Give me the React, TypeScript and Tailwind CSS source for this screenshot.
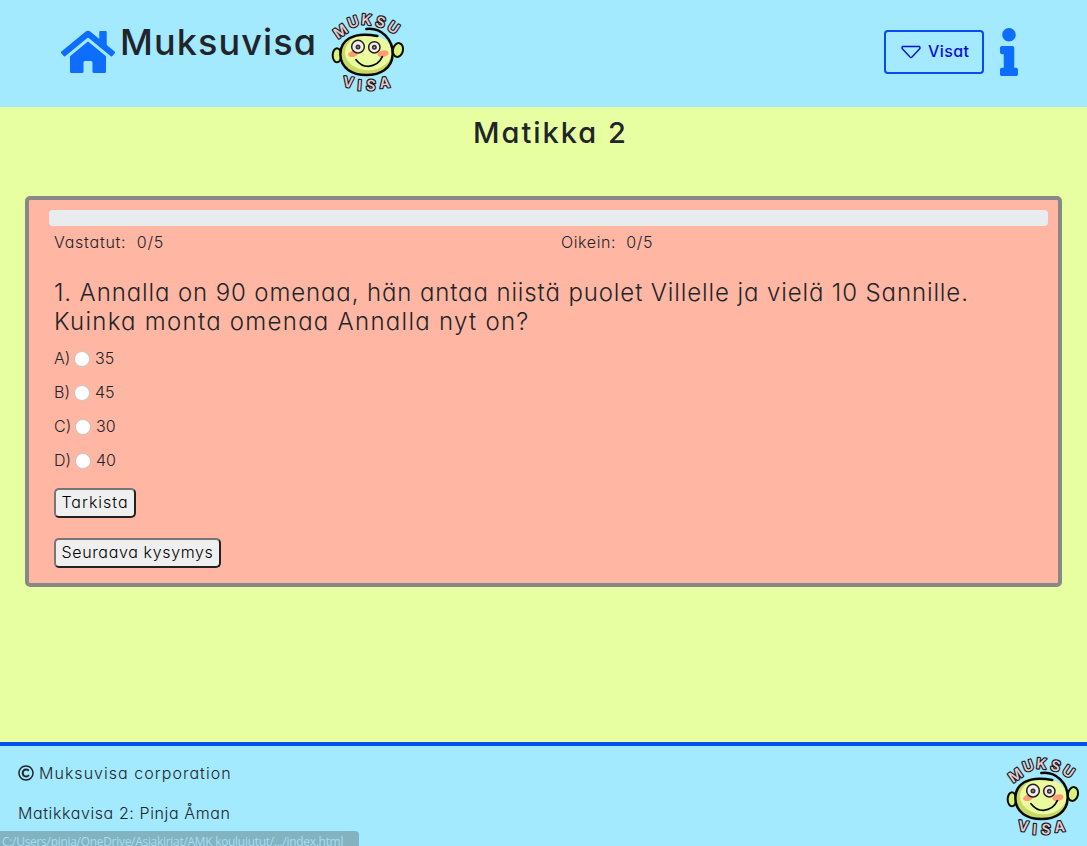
import React from "react";
import { FaHome, FaInfo, FaRegCopyright } from "react-icons/fa";

type Glyph = { ch: string; x: number; y: number; rotate: number };

const topGlyphs: Glyph[] = [
  { ch: "M", x: 47, y: 79, rotate: -35 },
  { ch: "U", x: 85, y: 51, rotate: -20 },
  { ch: "K", x: 124, y: 44, rotate: 5 },
  { ch: "S", x: 167, y: 51, rotate: 16 },
  { ch: "U", x: 205, y: 68, rotate: 34 },
];

const bottomGlyphs: Glyph[] = [
  { ch: "V", x: 70, y: 232, rotate: 8 },
  { ch: "I", x: 104, y: 241, rotate: 4 },
  { ch: "S", x: 138, y: 241, rotate: 6 },
  { ch: "A", x: 179, y: 233, rotate: -6 },
];

function Logo() {
  return (
    <svg viewBox="0 0 255 276" className="h-[92px] w-[85px] shrink-0">
      <g stroke="#0c0c06" strokeWidth="6" fill="#d9f27c">
        <ellipse cx="36" cy="151" rx="13" ry="21" />
        <ellipse cx="219" cy="135" rx="15" ry="21" transform="rotate(12 219 135)" />
      </g>
      <ellipse cx="124" cy="148" rx="78" ry="61" fill="#c9d765" />
      <ellipse cx="130" cy="142" rx="70" ry="54" fill="#eafc9e" />
      <path
        d="M124 72 C168 66 205 104 203 148 C201 190 166 210 124 210 C82 210 47 190 46 148 C46 108 80 78 157 93"
        fill="none"
        stroke="#080805"
        strokeWidth="7.5"
        strokeLinecap="round"
      />
      <ellipse cx="84" cy="147" rx="15" ry="9" fill="#ff9c73" transform="rotate(-12 84 147)" />
      <ellipse cx="174" cy="146" rx="17" ry="10" fill="#ff9c73" transform="rotate(-12 174 146)" />
      <g fill="#f4eef0" stroke="#24221a" strokeWidth="4.5">
        <circle cx="99" cy="125" r="19" />
        <circle cx="148" cy="127" r="17" />
      </g>
      <g fill="#c9c2c2" stroke="#37322c" strokeWidth="5">
        <circle cx="99" cy="126" r="5" />
        <circle cx="148" cy="127" r="5" />
      </g>
      <path d="M93 164 Q108 184 130 184 Q160 182 172 155" fill="none" stroke="#080805" strokeWidth="5" strokeLinecap="round" />
      <g
        fill="#e3cdd2"
        stroke="#1b191b"
        strokeWidth="7"
        strokeLinejoin="round"
        paintOrder="stroke"
        textAnchor="middle"
        className="font-['Inter',sans-serif] text-[43px] font-semibold"
      >
        {[...topGlyphs, ...bottomGlyphs].map((g, i) => (
          <text key={i} transform={`translate(${g.x} ${g.y}) rotate(${g.rotate})`} y="15">
            {g.ch}
          </text>
        ))}
      </g>
    </svg>
  );
}

const answers = [
  { label: "A)", value: "35", labelWidth: "w-[20px]" },
  { label: "B)", value: "45", labelWidth: "w-[20px]" },
  { label: "C)", value: "30", labelWidth: "w-[21px]" },
  { label: "D)", value: "40", labelWidth: "w-[21px]" },
];

export default function App() {
  return (
    <div className="relative flex h-[846px] w-[1087px] flex-col overflow-hidden bg-[#e8ffa1] font-['Inter',sans-serif] text-[16px] leading-6 font-light text-[#212529] [font-feature-settings:'cv11']">
      <header className="flex h-[107px] shrink-0 items-start bg-[#a3e9ff] pl-[61px]">
        <FaHome className="mt-[28px] h-12 w-[54px] text-[#0d6efd]" />
        <h1 className="mt-[18px] ml-[5px] w-[205px] text-[36px] leading-[48px] font-medium tracking-[1.1px] whitespace-nowrap">Muksuvisa</h1>
        <div className="mt-[5px]">
          <Logo />
        </div>
        <button className="mt-[30px] ml-auto flex h-11 w-[100px] items-center rounded-[4px] border-2 border-[#0a4bec] pl-[15px] font-medium tracking-[0.4px] text-[#0b12d4]">
          <svg viewBox="0 0 20 14" className="mr-[7px] h-[14px] w-5">
            <path d="M1.5 1.5 H18.5 Q19.5 3 18.5 4 L11 12 Q10 13 9 12 L1.5 4 Q0.5 3 1.5 1.5Z" fill="none" stroke="currentColor" strokeWidth="1.4" strokeLinejoin="round" />
          </svg>
          <span className="-mt-[2px] whitespace-nowrap">Visat</span>
        </button>
        <FaInfo className="mt-[28px] mr-[69px] ml-4 h-12 w-[18px] text-[#0d6efd]" />
      </header>

      <main className="flex-1">
        <h2 className="mt-[7px] ml-[473px] text-[29px] leading-[38px] font-medium tracking-[2px] whitespace-nowrap">Matikka 2</h2>
        <section className="mt-[44px] mr-[25px] ml-[25px] h-[391px] rounded-[5px] border-4 border-[#888885] bg-[#ffb7a4]">
          <div className="mt-[10px] mr-[10px] ml-5 h-4 rounded-[4px] bg-[#e9ecef]" />
          <div className="mt-1 ml-[25px] flex whitespace-pre">
            <span className="w-[507px] tracking-[0.75px]">Vastatut:  0/5</span>
            <span className="tracking-[0.6px]">Oikein:  0/5</span>
          </div>
          <h3 className="mt-[24px] ml-[25px] text-[24px] leading-[29px] whitespace-nowrap">
            <span className="block tracking-[0.88px]">1. Annalla on 90 omenaa, hän antaa niistä puolet Villelle ja vielä 10 Sannille.</span>
            <span className="block tracking-[1.27px]">Kuinka monta omenaa Annalla nyt on?</span>
          </h3>
          <div className="mt-[10px] ml-[25px] flex flex-col gap-[10px]">
            {answers.map((a) => (
              <label key={a.label} className="flex h-6 items-center">
                <span className={a.labelWidth}>{a.label}</span>
                <input type="radio" name="answer" className="mt-[2px] mr-[5px] size-4 appearance-none rounded-full border border-[#c9c5c3] bg-white" />
                <span>{a.value}</span>
              </label>
            ))}
          </div>
          <div className="mt-4 ml-[25px] flex flex-col items-start gap-5">
            <button className="h-[30px] w-[82px] rounded-[5px] border-2 border-t-[#767676] border-r-[#212121] border-b-[#212121] border-l-[#767676] bg-[#efefef] pb-[2px] text-center leading-6 tracking-[1px] whitespace-nowrap text-black">Tarkista</button>
            <button className="h-[30px] w-[167px] rounded-[5px] border-2 border-t-[#767676] border-r-[#212121] border-b-[#212121] border-l-[#767676] bg-[#efefef] pb-[2px] text-center leading-6 tracking-[0.65px] whitespace-nowrap text-black">Seuraava kysymys</button>
          </div>
        </section>
      </main>

      <footer className="flex h-[104px] shrink-0 items-start border-t-4 border-[#004fee] bg-[#a3e9ff] pl-[18px]">
        <div className="mt-[15px] flex flex-col gap-4">
          <p className="flex items-center gap-[5px]">
            <FaRegCopyright className="size-4" />
            <span className="tracking-[1.03px]">Muksuvisa corporation</span>
          </p>
          <p className="tracking-[0.6px]">Matikkavisa 2: Pinja Åman</p>
        </div>
        <div className="mt-[3px] mr-[2px] ml-auto">
          <Logo />
        </div>
      </footer>

      <div className="absolute top-[831px] left-0 h-[15px] w-[359px] overflow-hidden rounded-tr-[4px] bg-[#83b2c1] pl-[2px] font-['Open_Sans',sans-serif] text-[12px] leading-[21px] font-normal tracking-[-0.3px] whitespace-nowrap text-[#a3dff1]">
        C:/Users/pinja/OneDrive/Asiakirjat/AMK koulujutut/.../index.html
      </div>
    </div>
  );
}
